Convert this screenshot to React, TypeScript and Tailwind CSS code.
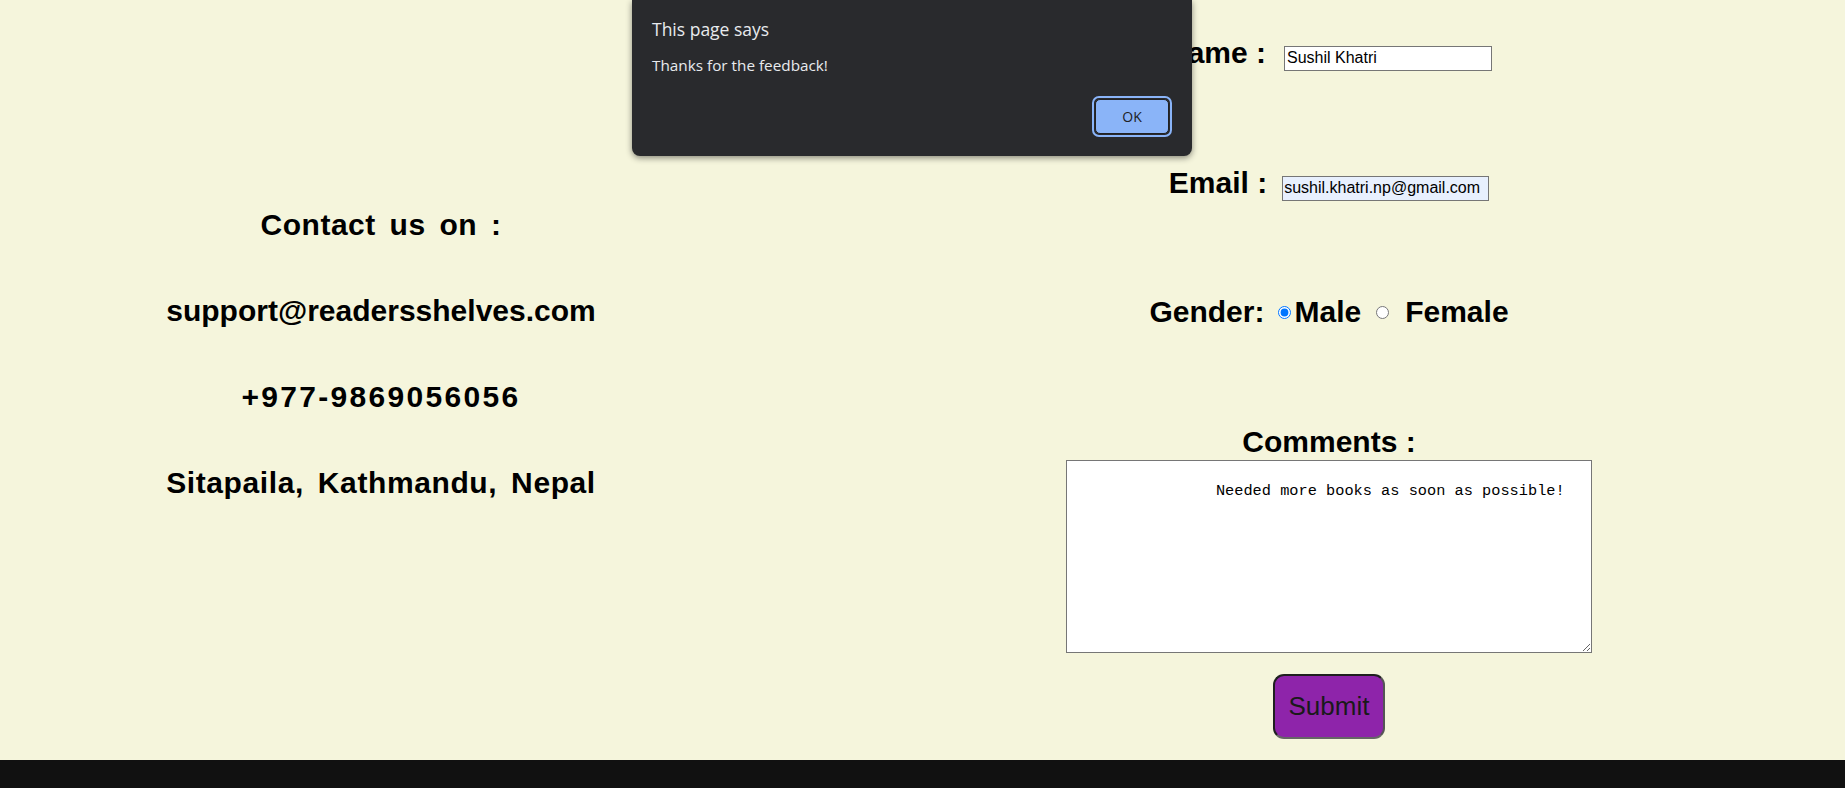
import { useState } from 'react'

const comic = "font-['Comic_Sans_MS','Liberation_Sans',sans-serif]"

export default function App() {
  const [gender, setGender] = useState('male')

  return (
    <div className={`relative min-h-screen bg-[#f5f5dc] text-black ${comic}`}>
      <div className="flex h-[760px] pl-[165px]">
        {/* Contact details */}
        <div className="w-[432px] pt-[182px] text-center text-[30px] font-bold [word-spacing:5px]">
          <div className="h-[86px] leading-[86px] tracking-[0.5px]">Contact us on :</div>
          <div className="h-[86px] leading-[86px]">support@readersshelves.com</div>
          <div className="h-[86px] leading-[86px] tracking-[2.3px]">+977-9869056056</div>
          <div className="h-[86px] leading-[86px] tracking-[0.6px]">Sitapaila, Kathmandu, Nepal</div>
        </div>

        {/* Feedback form */}
        <form className="ml-[469px] flex w-[526px] flex-col items-center text-[30px] font-bold">
          <div className="mt-[38px] flex h-[30px] items-baseline gap-[18px] leading-[30px]">
            <span>Name :</span>
            <input
              defaultValue="Sushil Khatri"
              className="h-[25px] w-[208px] border border-[#767676] bg-white px-[2px] font-['Liberation_Sans',sans-serif] text-[16px] font-normal leading-[18px] text-black"
            />
          </div>

          <div className="mt-[100px] flex h-[30px] items-baseline gap-[15px] leading-[30px]">
            <span>Email :</span>
            <input
              defaultValue="sushil.khatri.np@gmail.com"
              className="h-[25px] w-[207px] border border-[#767676] bg-[#e8f0fe] px-[1px] font-['Liberation_Sans',sans-serif] text-[16px] font-normal leading-[18px] text-black"
            />
          </div>

          <div className="mt-[99px] flex h-[30px] items-center leading-[30px]">
            <span>Gender:</span>
            <input
              type="radio"
              name="gender"
              checked={gender === 'male'}
              onChange={() => setGender('male')}
              className="m-0 ml-[14px] h-[13px] w-[13px] accent-[#0075ff]"
            />
            <span className="ml-[3px]">Male</span>
            <input
              type="radio"
              name="gender"
              checked={gender === 'female'}
              onChange={() => setGender('female')}
              className="m-0 ml-[15px] h-[13px] w-[13px] accent-[#0075ff]"
            />
            <span className="ml-[16px]">Female</span>
          </div>

          <div className="mt-[100px] h-[30px] leading-[30px]">Comments :</div>
          <textarea
            defaultValue={'\n                Needed more books as soon as possible!'}
            className="mt-[3px] h-[193px] w-[526px] border border-[#767676] bg-white px-[2px] pb-[2px] pt-[5px] font-['Liberation_Mono',monospace] text-[15.3px] font-normal leading-[17px] text-black"
          />

          <button
            type="button"
            className="mt-[21px] h-[65px] w-[112px] rounded-[11px] border-2 border-t-[#1f1f1f] border-l-[#1f1f1f] border-r-[#555] border-b-[#666] bg-[#8e24aa] text-[26px] font-normal text-[#1a1a1a]"
          >
            Submit
          </button>
        </form>
      </div>

      <footer className="h-[60px] bg-[#111111]" />

      {/* Browser alert dialog */}
      <div className="absolute left-[632px] top-0 h-[156px] w-[560px] rounded-b-[8px] bg-[#292a2d] font-['Open_Sans',sans-serif] text-[#e8eaed] shadow-[0_2px_6px_rgba(0,0,0,0.45)]">
        <div className="pl-[20px] pt-[17px] text-[17.5px] leading-[24px]">This page says</div>
        <div className="pl-[20px] pt-[12px] text-[15.3px] leading-[24px]">Thanks for the feedback!</div>
        <div className="absolute left-[460px] top-[96px] h-[41px] w-[80px] rounded-[7px] border-2 border-[#8ab4f8] p-[1px]">
          <div className="flex h-full w-full items-center justify-center rounded-[5px] border border-[#202124] bg-[#8ab4f8] text-[14px] text-[#202124]">
            OK
          </div>
        </div>
      </div>
    </div>
  )
}
